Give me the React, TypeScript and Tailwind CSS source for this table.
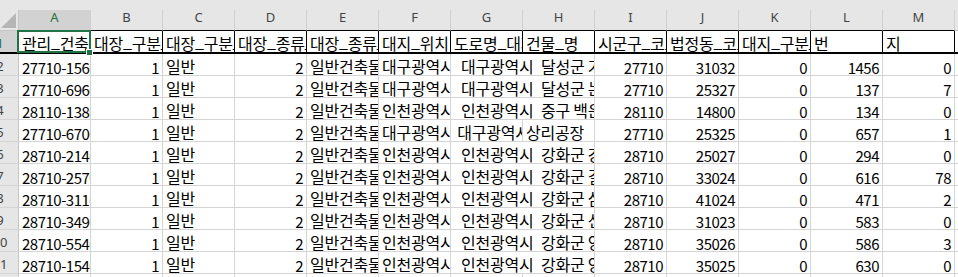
import React from "react";

const COLS = ["A", "B", "C", "D", "E", "F", "G", "H", "I", "J", "K", "L", "M"];

const HEADER = [
  "관리_건축물대장_PK",
  "대장_구분_코드",
  "대장_구분_코드_명",
  "대장_종류_코드",
  "대장_종류_코드_명",
  "대지_위치",
  "도로명_대지_위치",
  "건물_명",
  "시군구_코드",
  "법정동_코드",
  "대지_구분_코드",
  "번",
  "지",
];

type Row = {
  id: string;
  f: string;
  g: string;
  h: string;
  i: number;
  j: number;
  l: number;
  m: number;
};

const ROWS: Row[] = [
  { id: "27710-15600", f: "대구광역시 달성군 가창면", g: "대구광역시\u2002달성군 가창면", h: "", i: 27710, j: 31032, l: 1456, m: 0 },
  { id: "27710-69600", f: "대구광역시 달성군 논공읍", g: "대구광역시\u2002달성군 논공읍", h: "", i: 27710, j: 25327, l: 137, m: 7 },
  { id: "28110-13800", f: "인천광역시 중구 백운동", g: "인천광역시\u2002중구 백운로", h: "", i: 28110, j: 14800, l: 134, m: 0 },
  { id: "27710-67000", f: "대구광역시 달성군 화원읍", g: "대구광역시 달성군", h: "상리공장", i: 27710, j: 25325, l: 657, m: 1 },
  { id: "28710-21400", f: "인천광역시 강화군 강화읍", g: "인천광역시\u2002강화군 강화읍", h: "", i: 28710, j: 25027, l: 294, m: 0 },
  { id: "28710-25700", f: "인천광역시 강화군 길상면", g: "인천광역시\u2002강화군 길상면", h: "", i: 28710, j: 33024, l: 616, m: 78 },
  { id: "28710-31100", f: "인천광역시 강화군 삼산면", g: "인천광역시\u2002강화군 삼산면", h: "", i: 28710, j: 41024, l: 471, m: 2 },
  { id: "28710-34900", f: "인천광역시 강화군 선원면", g: "인천광역시\u2002강화군 선원면", h: "", i: 28710, j: 31023, l: 583, m: 0 },
  { id: "28710-55400", f: "인천광역시 강화군 양도면", g: "인천광역시\u2002강화군 양도면", h: "", i: 28710, j: 35026, l: 586, m: 3 },
  { id: "28710-15400", f: "인천광역시 강화군 양사면", g: "인천광역시\u2002강화군 양사면", h: "", i: 28710, j: 35025, l: 630, m: 0 },
];

const numBase =
  "shrink-0 h-full overflow-hidden whitespace-pre border-r px-[3px] pt-[5px] leading-[18px] text-[15px] tracking-[-0.5px] text-black";
const txtBase =
  "shrink-0 h-full overflow-hidden whitespace-pre border-r px-[3px] pt-[3px] leading-[18px] text-[16px] tracking-[-0.25px] text-black";

function Cell({
  children,
  right,
  text,
  dark,
}: {
  children?: React.ReactNode;
  right?: boolean;
  text?: boolean;
  dark?: boolean;
}) {
  return (
    <div
      className={`${text ? txtBase : numBase} w-[72px] ${right ? "text-right" : "text-left"} ${
        dark ? "border-black" : "border-[#d4d4d4]"
      }`}
    >
      {children}
    </div>
  );
}

function withUnderscores(s: string) {
  const parts = s.split("_");
  const out: React.ReactNode[] = [];
  parts.forEach((p, i) => {
    if (i > 0)
      out.push(
        <span key={"u" + i} className="relative top-[-2px]">
          _
        </span>
      );
    out.push(<React.Fragment key={"p" + i}>{p}</React.Fragment>);
  });
  return out;
}

function RowHead({ n, selected }: { n: number; selected?: boolean }) {
  return (
    <div
      className={`shrink-0 w-[19px] h-full overflow-hidden border-r border-[#c6c6c6] pt-[5px] ${
        selected ? "bg-[#d2d2d2] text-[#217346]" : "bg-[#e6e6e6] text-[#444444]"
      }`}
      style={{ fontFamily: '"Noto Sans", sans-serif' }}
    >
      <div className="ml-[-20px] w-[40px] text-center text-[13px] leading-[14px]">{n}</div>
    </div>
  );
}

export default function App() {
  return (
    <div
      className="relative w-[958px] h-[277px] overflow-hidden bg-white"
      style={{ fontFamily: '"Noto Sans CJK KR", "Noto Sans", sans-serif' }}
    >
      {/* top strip */}
      <div className="h-[10px] bg-[#e6e6e6]" />

      {/* column headers */}
      <div className="flex h-[21px] bg-[#e6e6e6]">
        <div className="shrink-0 w-[19px] h-full border-r border-b border-[#c6c6c6]">
          <svg width="19" height="20" className="block" viewBox="0 0 19 20">
            <polygon points="16,3 16,18 1,18" fill="#b6b6b6" />
          </svg>
        </div>
        {COLS.map((c) => (
          <div
            key={c}
            className={`shrink-0 w-[72px] h-full border-r border-[#cfcfcf] border-b border-b-[#000000] text-center text-[13px] leading-[14px] ${
              c === "A" ? "bg-[#d2d2d2] text-[#217346]" : "text-[#444444]"
            }`}
            style={{ fontFamily: '"Noto Sans", sans-serif' }}
          >
            {c}
          </div>
        ))}
        <div className="flex-1 h-full border-b border-[#c6c6c6]" />
      </div>

      {/* row 1 (field names) */}
      <div className="flex h-[23px] border-b-2 border-black">
        <RowHead n={1} selected />
        {HEADER.map((h, idx) => (
          <Cell key={idx} text dark>
            {withUnderscores(h)}
          </Cell>
        ))}
        <div className="flex-1 h-full" />
      </div>

      {/* data rows */}
      {ROWS.map((r, idx) => (
        <div key={idx} className="flex h-[22px] border-b border-[#d4d4d4]">
          <RowHead n={idx + 2} />
          <Cell>{r.id}</Cell>
          <Cell right>1</Cell>
          <Cell text>일반</Cell>
          <Cell right>2</Cell>
          <Cell text>일반건축물</Cell>
          <Cell text>{r.f}</Cell>
          {r.h ? (
            <>
              <Cell text>{" " + r.g}</Cell>
              <Cell text>{r.h}</Cell>
            </>
          ) : (
            <div className={`${txtBase} w-[144px] border-[#d4d4d4] pl-[10px]`}>{r.g}</div>
          )}
          <Cell right>{r.i}</Cell>
          <Cell right>{r.j}</Cell>
          <Cell right>0</Cell>
          <Cell right>{r.l}</Cell>
          <Cell right>{r.m}</Cell>
          <div className="flex-1 h-full" />
        </div>
      ))}

      {/* empty row 12 */}
      <div className="flex h-[22px] border-b border-[#d4d4d4]">
        <RowHead n={12} />
        {COLS.map((c) => (
          <Cell key={c} />
        ))}
        <div className="flex-1 h-full" />
      </div>

      {/* selection of A1 */}
      <div className="absolute left-[17px] top-[30px] w-[74px] h-[23px] border-2 border-[#217346] pointer-events-none" />
      <div className="absolute left-[86px] top-[49px] w-[7px] h-[7px] bg-[#217346] border border-white" />
    </div>
  );
}
